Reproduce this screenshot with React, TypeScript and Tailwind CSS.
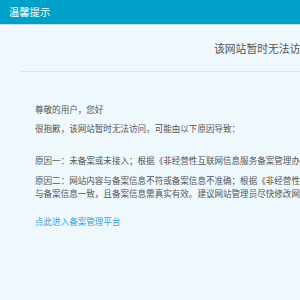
import React from 'react'

const FONT = '"Microsoft YaHei", "Noto Sans CJK SC", "Noto Sans", sans-serif'

export default function App() {
  return (
    <div className="w-[300px] h-[300px] overflow-hidden bg-[#eef8fd]" style={{ fontFamily: FONT }}>
      {/* header bar */}
      <div className="h-[24px] bg-[#00a1c9] border-b border-[#b9e2f1] flex items-center pl-[9px] box-content">
        <span className="text-white text-[10.3px] leading-[14px]">温馨提示</span>
      </div>

      <div className="ml-[21px] w-[700px]">
        <div className="pt-[16px] pb-[16px] pl-[193px] border-b border-[#cbe9f6]">
          <h1 className="text-[10.8px] leading-[14px] text-[#555] font-normal whitespace-nowrap">
            该网站暂时无法访问
          </h1>
        </div>

        <div className="pl-[14px] text-[8.55px] leading-[13px] text-[#555] whitespace-nowrap">
          <p className="mt-[31px]">尊敬的用户，您好</p>
          <p className="mt-[6px]">很抱歉，该网站暂时无法访问，可能由以下原因导致：</p>
          <p className="mt-[19px]">
            原因一：未备案或未接入；根据《非经营性互联网信息服务备案管理办法》第五条规定，在中华人民共和国境内提供非经营性互联网信息服务，应当依法履行备案手续。
          </p>
          <p className="mt-[7px]">
            原因二：网站内容与备案信息不符或备案信息不准确；根据《非经营性互联网信息服务备案管理办法》规定，网站内容应
            <br />
            与备案信息一致，且备案信息需真实有效。建议网站管理员尽快修改网站内容或备案信息。
          </p>
          <a href="#" className="block mt-[15px] text-[#3aa3de]">
            点此进入备案管理平台
          </a>
        </div>
      </div>
    </div>
  )
}
